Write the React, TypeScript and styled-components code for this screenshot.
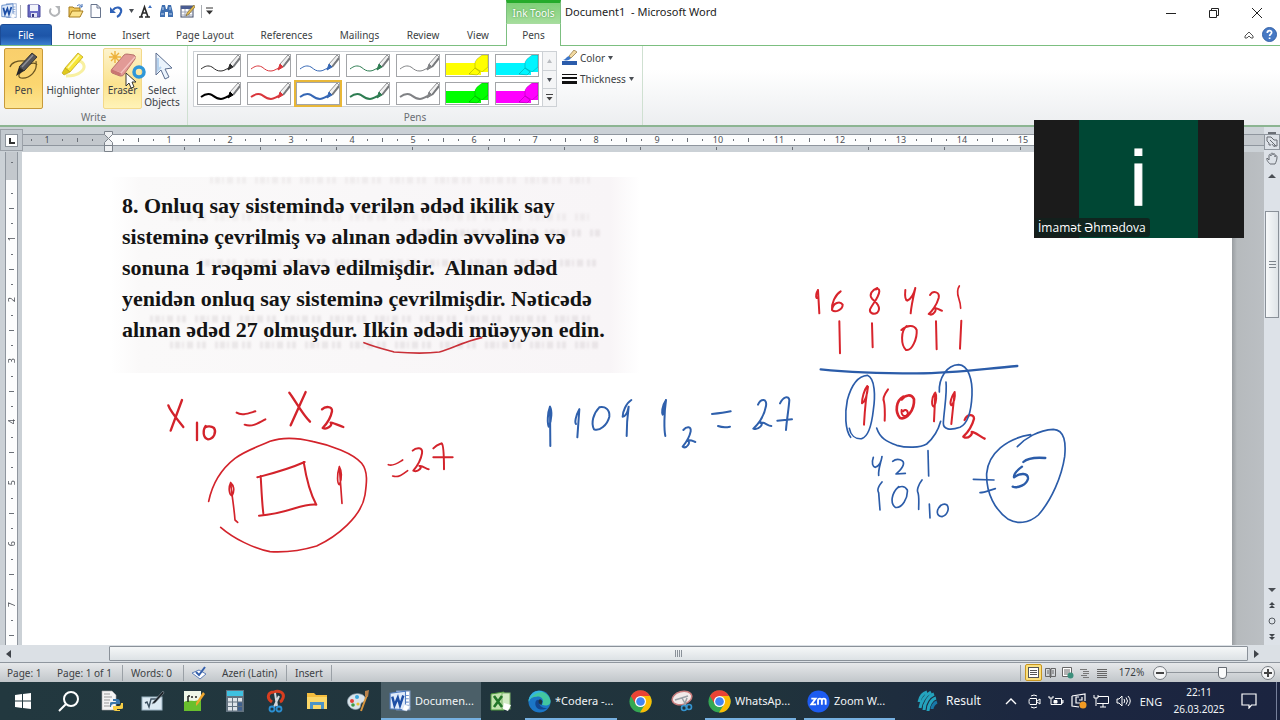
import React from 'react';
import styled, { createGlobalStyle } from 'styled-components';

const GlobalStyle = createGlobalStyle`
  * { box-sizing: border-box; }
  body { margin: 0; background: #c9d0d6; }
  button, input { font: inherit; color: inherit; }
  button { border: 0; background: none; padding: 0; margin: 0; cursor: default; }
  svg { display: block; flex: none; }
`;

const ui = '"Noto Sans", "Open Sans", sans-serif';
const green = '#7cbf80';

const Shell = styled.div`
  position: relative;
  display: flex;
  flex-direction: column;
  min-height: 100vh;
  overflow: hidden;
  font: 10px/14px ${ui};
  color: #3c3f44;
`;
const Spacer = styled.div`flex: 1;`;

/* ---------- title bar and tabs ---------- */
const TitleBar = styled.header`
  display: flex;
  height: 24px;
  background: #fff;
`;
const QuickAccess = styled.div`
  display: flex;
  align-items: center;
  width: 506px;
  padding: 0 0 2px 1px;
`;
const QuickButton = styled.button<{ $w?: number }>`
  display: flex;
  justify-content: center;
  width: ${p => p.$w ?? 21}px;
`;
const Divider = styled.span`
  width: 1px;
  height: 13px;
  background: #a9adb2;
`;
const InkTools = styled.div`
  width: 55px;
  padding-top: 3px;
  border: 1px solid ${green};
  border-top: 3px solid #25ab2b;
  border-bottom-color: #a8dca0;
  background: linear-gradient(#7fd078, #a5dd9c);
  color: #fff;
  text-align: center;
  text-shadow: 0 0 2px #3d8b3d;
  white-space: nowrap;
`;
const WindowTitle = styled.h1`
  flex: 1;
  margin: 0;
  padding-left: 4px;
  font-size: 11px;
  line-height: 24px;
  font-weight: 400;
  color: #222;
`;
const WindowButtons = styled.div`
  display: flex;
  align-items: center;
  padding: 2px 2px 0 0;
`;
const WindowButton = styled.button`
  display: flex;
  justify-content: center;
  width: 43px;
`;
const TabRow = styled.nav`
  display: flex;
  height: 22px;
  background: #fff;
  border-bottom: 1px solid ${green};
`;
const FileTab = styled.button`
  width: 52px;
  margin-right: 3px;
  border: 1px solid #1c4c96;
  border-bottom: 0;
  border-radius: 3px 3px 0 0;
  background: linear-gradient(#2461b3, #1d55a8 55%, #3c7fd0);
  color: #fff;
`;
const Tab = styled.button<{ $w: number }>`
  width: ${p => p.$w}px;
  text-align: center;
  white-space: nowrap;
`;
const ActiveTab = styled.button`
  width: 55px;
  margin: 0 0 -1px auto;
  border: 1px solid ${green};
  border-width: 0 1px;
  background: #fff;
`;
const TabList = styled.div`
  display: flex;
  width: 561px;
`;
const TabTools = styled.div`
  display: flex;
  align-items: center;
  gap: 8px;
  margin-left: auto;
  padding-right: 3px;
`;

/* ---------- ribbon ---------- */
const Ribbon = styled.section`
  display: flex;
  height: 81px;
  background: linear-gradient(#fff 30%, #eceef0);
  border-bottom: 2px solid #8cb592;
`;
const Group = styled.div<{ $w: number }>`
  display: flex;
  flex-direction: column;
  width: ${p => p.$w}px;
  border-right: 1px solid #cfe0d1;
`;
const GroupBody = styled.div`
  display: flex;
  flex: 1;
  padding: 2px 4px 0;
`;
const GroupLabel = styled.div`
  height: 15px;
  color: #6a6e73;
  text-align: center;
`;
const BigButton = styled.button<{ $w: number; $state?: 'on' | 'hover' }>`
  position: relative;
  display: flex;
  flex-direction: column;
  align-items: center;
  gap: 1px;
  width: ${p => p.$w}px;
  height: 61px;
  padding-top: 2px;
  line-height: 12px;
  border: 1px solid ${p => (p.$state === 'on' ? '#c79a3a' : p.$state === 'hover' ? '#f3d98a' : 'transparent')};
  border-radius: 2px;
  background: ${p =>
    p.$state === 'on'
      ? 'linear-gradient(#f9cf6c, #fbd670 60%, #fde591)'
      : p.$state === 'hover'
        ? 'linear-gradient(#fdf3cd, #fbe38f 60%, #fff3b8)'
        : 'none'};
`;
const Pointer = styled.svg`
  position: absolute;
  left: 20px;
  top: 14px;
`;
const Gallery = styled.div`
  display: flex;
  width: 364px;
  height: 56px;
  margin: 3px 0 0 1px;
  border: 1px solid #cdd1d5;
  background: #fff;
`;
const Swatches = styled.div`
  display: grid;
  grid-template-columns: repeat(7, 44px);
  justify-content: space-between;
  align-content: start;
  row-gap: 5px;
  width: 348px;
  padding: 2px 3px;
`;
const Swatch = styled.button<{ $on?: boolean }>`
  height: 23px;
  border: 1px solid #a3a5a8;
  outline: ${p => (p.$on ? '2px solid #e8b738' : 'none')};
`;
const GalleryScroll = styled.div`
  display: grid;
  grid-template-rows: repeat(3, 1fr);
  flex: 1;
  border-left: 1px solid #cdd1d5;
  background: #f4f5f6;
`;
const GalleryStep = styled.button`
  display: flex;
  align-items: center;
  justify-content: center;
  & + & { border-top: 1px solid #cdd1d5; }
`;
const InkOptions = styled.div`
  display: flex;
  flex-direction: column;
  gap: 5px;
  padding: 2px 0 0 5px;
`;
const InkOption = styled.button`
  display: flex;
  align-items: center;
  gap: 3px;
  height: 16px;
`;

/* ---------- document area ---------- */
const Workspace = styled.main`
  display: flex;
  flex: 1;
  background: #cbd1d6;
`;
const Column = styled.div`
  display: flex;
  flex: 1;
  flex-direction: column;
  min-width: 0;
`;
const RulerRow = styled.div`
  display: flex;
  height: 25px;
`;
const TabStop = styled.button`
  width: 23px;
  height: 22px;
  margin-top: 2px;
  padding: 3px 4px;
  border: 1px solid #9ba1a8;
  background: #c3c9cf;
`;
const TabStopFace = styled.span`
  display: block;
  width: 13px;
  height: 13px;
  padding: 3px 0 0 3px;
  border: 1px solid #8b929a;
  background: #fff;
`;
const RulerStack = styled.div`
  position: relative;
  flex: 1;
  min-width: 0;
  padding-top: 7px;
  overflow: hidden;
`;
const HRuler = styled.div`
  display: flex;
  height: 12px;
  border: 1px solid #8f969e;
  border-width: 1px 0;
  background: #c3c8cd;
`;
const RulerPart = styled.div<{ $grey?: boolean }>`
  display: flex;
  flex: none;
  padding-left: ${p => (p.$grey ? 1 : 8)}px;
  padding-right: ${p => (p.$grey ? 8 : 40)}px;
  background: ${p => (p.$grey ? '#c3c8cd' : '#fcfdfd')};
`;
const Slot = styled.span<{ $v?: boolean; $wide?: boolean }>`
  display: flex;
  align-items: center;
  justify-content: center;
  flex: none;
  width: ${p => (p.$v ? 11 : p.$wide ? 16 : 15)}px;
  height: ${p => (p.$v ? (p.$wide ? 16 : 15) : 10)}px;
  font-size: 9px;
  line-height: 10px;
  color: #4d5157;
`;
const Turned = styled.span`
  writing-mode: vertical-rl;
  transform: rotate(180deg);
  line-height: 11px;
`;
const Mark = styled.i<{ $w: number; $h: number }>`
  flex: none;
  width: ${p => p.$w}px;
  height: ${p => p.$h}px;
  background: #6b7077;
`;
const StopRow = styled.div`
  display: flex;
  gap: 75px;
  padding: 1px 0 0 161px;
`;
const Indent = styled.svg`
  position: absolute;
  left: 81px;
  top: 4px;
`;
const Body = styled.div`
  display: flex;
  flex: 1;
  overflow: hidden;
`;
const VRuler = styled.div`
  display: flex;
  width: 22px;
  height: 0;
  min-height: 100%;
  overflow: hidden;
  padding: 0 4px 0 5px;
`;
const VRulerTrack = styled.div`
  width: 13px;
  border: 1px solid #8f969e;
  border-width: 0 1px;
  background: linear-gradient(#c3c8cd 28px, #fcfdfd 28px);
  padding-top: 3px;
  overflow: hidden;
`;
const Page = styled.article`
  position: relative;
  flex: 1;
  min-width: 0;
  background: #fff;
`;
const Gutter = styled.div`
  width: 32px;
  background: linear-gradient(90deg, #999da1, #b6babd 5px, #bbbfc3);
`;
const Scan = styled.div`
  position: relative;
  width: 530px;
  height: 196px;
  margin: 25px 0 0 88px;
  padding: 13px 0 0 12px;
  background: linear-gradient(90deg, #fff, #faf9f9 30px, #f8f5f7 500px, #fff);
`;
const ShowThrough = styled.svg`
  position: absolute;
  left: 0;
  top: 0;
  filter: blur(1px);
`;
const Question = styled.p`
  position: relative;
  margin: 0;
  font: 700 22px/31px "Liberation Serif", serif;
  color: #141414;
  white-space: pre;
`;
const InkLayer = styled.svg`
  position: absolute;
  left: 0;
  top: 0;
`;
const VScroll = styled.div`
  display: flex;
  flex-direction: column;
  align-items: center;
  width: 16px;
  padding-top: 4px;
  background: #dde2e8;
`;
const ScrollButton = styled.button<{ $h: number; $boxed?: boolean }>`
  display: flex;
  align-items: center;
  justify-content: center;
  width: 16px;
  height: ${p => p.$h}px;
  border: ${p => (p.$boxed ? '1px solid #8f969e' : '0')};
`;
const VThumb = styled.div`
  display: grid;
  place-items: center;
  width: 14px;
  height: 107px;
  margin-top: 26px;
  border: 1px solid #8a9199;
  background: linear-gradient(90deg, #f7f9fa, #dfe4e8);
`;
const HScroll = styled.div`
  display: flex;
  height: 17px;
  padding-right: 16px;
  background: #dbe0e5;
`;
const HThumb = styled.div`
  display: grid;
  place-items: center;
  flex: 1;
  margin: 1px 0 1px 93px;
  border: 1px solid #8a9199;
  border-radius: 1px;
  background: linear-gradient(#f5f7f8, #dde2e5);
`;

/* ---------- status bar ---------- */
const StatusBar = styled.footer`
  display: flex;
  align-items: center;
  height: 20px;
  padding: 0 5px 0 7px;
  border-top: 1px solid #8f969e;
  background: linear-gradient(#e6e8ea, #c1c6ca);
`;
const StatusItem = styled.button<{ $w: number }>`
  display: flex;
  width: ${p => p.$w}px;
  white-space: nowrap;
`;
const StatusSep = styled.span<{ $gap?: number }>`
  width: 1px;
  height: 16px;
  margin-right: ${p => p.$gap ?? 8}px;
  background: #9aa0a6;
`;
const ViewButton = styled.button<{ $on?: boolean }>`
  display: flex;
  align-items: center;
  justify-content: center;
  width: 17px;
  height: 17px;
  border: ${p => (p.$on ? '1px solid #c79520' : '0')};
  border-radius: 2px;
  background: ${p => (p.$on ? '#fbe07c' : 'none')};
`;
const RoundButton = styled.button`
  display: grid;
  place-items: center;
  width: 14px;
  height: 14px;
  border: 1px solid #777c82;
  border-radius: 50%;
  background: #f4f5f6;
`;
const ZoomSlider = styled.input`
  appearance: none;
  width: 94px;
  height: 14px;
  margin: 0;
  background: linear-gradient(#8f959b, #8f959b) center / 100% 1px no-repeat;
  &::-webkit-slider-thumb {
    appearance: none;
    width: 9px;
    height: 12px;
    border: 1px solid #666b72;
    border-radius: 1px 1px 5px 5px;
    background: #fafbfb;
  }
`;

/* ---------- taskbar ---------- */
const Taskbar = styled.nav`
  display: flex;
  height: 38px;
  background: linear-gradient(90deg, #22383f, #20333c 60%, #1c2740 80%, #1b2440);
  color: #f2f5f7;
`;
const Task = styled.button<{ $w: number; $gap?: number; $pad?: number; $open?: boolean; $active?: boolean; $label?: boolean }>`
  display: flex;
  flex: none;
  align-items: center;
  justify-content: ${p => (p.$label ? 'flex-start' : 'center')};
  gap: 4px;
  width: ${p => p.$w}px;
  margin-left: ${p => p.$gap ?? 0}px;
  padding-left: ${p => p.$pad ?? (p.$label ? 3 : 0)}px;
  border-top: 2px solid transparent;
  border-bottom: 2px solid ${p => (p.$open ? '#76b0e0' : 'transparent')};
  background: ${p => (p.$active ? '#4b5f68' : 'none')};
  font-size: 11px;
  white-space: nowrap;
`;
const ResultLabel = styled.span`
  padding-left: 4px;
  font-size: 12px;
`;
const TrayButton = styled.button<{ $w: number; $size?: number }>`
  display: flex;
  flex: none;
  align-items: center;
  justify-content: center;
  width: ${p => p.$w}px;
  font-size: ${p => p.$size ?? 11}px;
  line-height: 17px;
`;
const ShowDesktop = styled.button`
  width: 4px;
  margin-left: 9px;
  border-left: 1px solid #76809a;
`;

/* ---------- meeting tile ---------- */
const VideoTile = styled.aside`
  position: absolute;
  right: 36px;
  top: 120px;
  width: 210px;
  height: 118px;
  background: #1b1b1b;
`;
const Avatar = styled.div`
  width: 119px;
  height: 118px;
  margin-left: 45px;
  padding-top: 23px;
  background: #004734;
  color: #fff;
  font: 400 78px/72px "Liberation Sans", sans-serif;
  -webkit-text-stroke: 1px #fff;
  text-align: center;
`;
const NameTag = styled.span`
  position: absolute;
  left: 1px;
  bottom: 1px;
  height: 19px;
  padding: 0 4px 0 3px;
  border-radius: 3px;
  background: rgba(18, 32, 28, 0.85);
  color: #fff;
  font: 12px/19px "Open Sans", "Noto Sans", sans-serif;
  white-space: nowrap;
`;

/* ---------- small drawings ---------- */
const Down = ({ up, w = 6, c = '#4a4e54' }: { up?: boolean; w?: number; c?: string }) => (
  <svg width={w} height="4" viewBox="0 0 6 4" preserveAspectRatio="none"><path d={up ? 'M0 4L3 0L6 4Z' : 'M0 0H6L3 4Z'} fill={c} /></svg>
);
const Side = ({ left }: { left?: boolean }) => (
  <svg width="5" height="8" viewBox="0 0 5 8"><path d={left ? 'M5 0V8L0 4Z' : 'M0 0V8L5 4Z'} fill="#40444a" /></svg>
);
const WordIcon = ({ s = 16 }: { s?: number }) => (
  <svg width={s} height={s} viewBox="0 0 20 20">
    <rect x="7" y="1" width="12" height="17" fill="#fff" stroke="#8ba5d0" />
    <path d="M14 5h4M14 8h4M14 11h4M14 14h4" stroke="#7a99cf" />
    <path d="M1 3L15 1V18L1 17Z" fill="#dfeafa" stroke="#4f7cc0" />
    <path d="M3 6l2 8 3-7 2 7 3-9" fill="none" stroke="#1d4ea5" strokeWidth="2.2" />
    <path d="M14 13l5 2-3 4-4-1z" fill="#fff" stroke="#c8d4e8" strokeWidth=".5" />
  </svg>
);
const SaveIcon = () => (
  <svg width="14" height="14" viewBox="0 0 14 14">
    <path d="M1 1H12L13 2V13H1Z" fill="#6a6bc4" stroke="#4b4b9c" />
    <rect x="3" y="1" width="8" height="6" fill="#f2f4fb" /><rect x="4" y="9" width="6" height="4" fill="#dfe1f2" /><rect x="5" y="10" width="2" height="3" fill="#34347c" />
  </svg>
);
const RedoIcon = () => (
  <svg width="13" height="13" viewBox="0 0 13 13"><path d="M3 3.5A4.5 4.5 0 1 0 10.5 4" fill="none" stroke="#b3b5b8" strokeWidth="2" /><path d="M7 1h5v5z" fill="#b3b5b8" /></svg>
);
const OpenIcon = () => (
  <svg width="16" height="14" viewBox="0 0 16 14">
    <path d="M1 13V3h4l1 1h6v3" fill="#f0c95c" stroke="#a67c1d" /><path d="M1 13L4 7H15L12 13Z" fill="#fbe28a" stroke="#a67c1d" />
    <path d="M9 2c2-2 4-1 5 1M14 0v3h-3" fill="none" stroke="#3e6cb5" />
  </svg>
);
const NewIcon = () => (
  <svg width="11" height="14" viewBox="0 0 11 14"><path d="M1 .5H7L10.5 4V13.5H1Z" fill="#fdfdff" stroke="#68758d" /><path d="M7 .5V4H10.5" fill="none" stroke="#68758d" /></svg>
);
const UndoIcon = () => (
  <svg width="13" height="13" viewBox="0 0 13 13"><path d="M3 5C6 1 12 2 11 7C10.5 9 9 11 7 12" fill="none" stroke="#2f62b8" strokeWidth="2.2" /><path d="M0 2V8H6Z" fill="#2f62b8" /></svg>
);
const GrowIcon = () => (
  <svg width="15" height="14" viewBox="0 0 15 14"><path d="M1 13h4M7 13h5M3 13L6.500 3L10 13M4 9h5" fill="none" stroke="#2a2a2a" strokeWidth="1.600" /><path d="M10 4l2-3 2 3z" fill="#3d6fc0" /></svg>
);
const FindIcon = () => (
  <svg width="15" height="14" viewBox="0 0 15 14">
    <path d="M3 1h3l1 4h1l1-4h3l2 8v4H9V8H6v5H1V9Z" fill="#3f6fb0" /><path d="M2 10h3M10 10h3M4 3v3M11 3v3" stroke="#bcd2ee" />
  </svg>
);
const TableIcon = () => (
  <svg width="15" height="15" viewBox="0 0 15 15">
    <rect x="1" y="2" width="12" height="11" fill="#fff" stroke="#3f4a66" /><rect x="1" y="2" width="12" height="3" fill="#4a5c92" />
    <path d="M1 8h12M1 11h12M5 5v8M9 5v8" stroke="#8b93a8" strokeWidth=".8" /><path d="M14 1L7 9L6 12L9 10L15 3Z" fill="#e5bd52" stroke="#6f5a28" strokeWidth=".6" />
  </svg>
);
const PenIcon = () => (
  <svg width="32" height="32" viewBox="0 0 32 32">
    <path d="M17 10C9 9 3 12 2 16M28 10C30 20 22 28 13 27C9 26 11 22 16 17C20 13 27 10 29 14" fill="none" stroke="#6b5520" strokeWidth="1.200" />
    <path d="M24 2L29 6L16 20L11 16Z" fill="#55555a" stroke="#222" strokeWidth=".8" /><path d="M11 16L16 20L8 25Z" fill="#26262a" /><path d="M25 4L14 16" stroke="#909096" strokeWidth="1.500" />
  </svg>
);
const MarkerIcon = () => (
  <svg width="32" height="32" viewBox="0 0 32 32">
    <path d="M19 10C27 9 29 16 25 20C20 25 14 25 9 25" fill="none" stroke="#f8f0a0" strokeWidth="3" />
    <path d="M21 2L26 6L13 21L8 17Z" fill="#f7e637" stroke="#c0a51c" strokeWidth=".8" /><path d="M8 17L13 21L7 24L5 22Z" fill="#e0c91c" stroke="#b59a18" strokeWidth=".6" /><path d="M22 4L11 17" stroke="#fffbb0" strokeWidth="1.800" />
  </svg>
);
const EraserIcon = () => (
  <svg width="32" height="32" viewBox="0 0 32 32">
    <path d="M8 0V12M2 6H14M4 2L12 10M12 2L4 10" stroke="#edb23c" strokeWidth="1.400" />
    <path d="M17 4Q18 3 20 3L27 4Q29 5 28 8L18 22Q16 26 13 25L5 22Q3 20 5 18Z" fill="#e29a96" stroke="#a9605c" strokeWidth=".8" />
    <path d="M4 19L14 22L28 6" fill="none" stroke="#f6c5c1" strokeWidth="1.200" /><path d="M14 22L13 25L4 21V18Z" fill="#c97671" />
  </svg>
);
const SelectIcon = () => (
  <svg width="32" height="32" viewBox="0 0 32 32"><path d="M10 2V24L15 19L19 28L23 26L19 18L26 17Z" fill="#eaf3fc" stroke="#5b6d8f" /><path d="M12 7V19L15 16" fill="none" stroke="#b5d2ee" strokeWidth="2" /></svg>
);
const PenSwatch = ({ color, bold }: { color: string; bold?: boolean }) => (
  <svg width="42" height="21" viewBox="0 0 42 21">
    <rect width="42" height="21" fill="#fff" />
    <path d="M3 14C7 11 10 10 14 12C18 15 19 16 23 16C26 16 28 14 31 13" fill="none" stroke={color} strokeWidth={bold ? 2 : 1} />
    <path d="M40 0L42 2L35 12L32 9Z" fill="#f0f0f0" stroke="#77797c" strokeWidth=".8" /><path d="M42 3L35 12" stroke="#77797c" strokeWidth="2" /><path d="M32 9L35 12L30 15Z" fill={color} stroke={color} />
  </svg>
);
const MarkerSwatch = ({ color }: { color: string }) => (
  <svg width="42" height="21" viewBox="0 0 42 21">
    <rect width="42" height="21" fill="#fff" /><path d="M0 8H42V20H0Z" fill={color} />
    <path d="M31 4L36 0H42V12L36 17L29 13V7Z" fill={color} stroke="rgba(0,0,0,.22)" strokeWidth=".8" /><path d="M29 13L34 17L31 20L23 19Z" fill={color} stroke="rgba(0,0,0,.25)" strokeWidth=".8" /><rect x="35" y="17" width="7" height="4" fill="#fff" />
  </svg>
);
const Chrome = () => (
  <svg width="23" height="23" viewBox="0 0 24 24">
    <circle cx="12" cy="12" r="11.500" fill="#34a853" />
    <path d="M2 6.200A11.500 11.500 0 0 1 22 6.200H12L7 14.500Z" fill="#ea4335" /><path d="M22 6.200A11.500 11.500 0 0 1 11.500 23.500L17 14.500L12 6.200Z" fill="#fbbc05" />
    <circle cx="12" cy="12" r="5.800" fill="#fff" /><circle cx="12" cy="12" r="4.500" fill="#4285f4" />
  </svg>
);

const Ticks = ({ v }: { v?: boolean }) => (
  <>
    <Slot $v={v}><Mark $w={v ? 2 : 1} $h={v ? 1 : 2} /></Slot>
    <Slot $v={v}><Mark $w={v ? 5 : 1} $h={v ? 1 : 4} /></Slot>
    <Slot $v={v}><Mark $w={v ? 2 : 1} $h={v ? 1 : 2} /></Slot>
  </>
);
const Segment = ({ n, v }: { n: number; v?: boolean }) => (
  <>
    <Ticks v={v} />
    <Slot $v={v} $wide>{v ? <Turned>{n}</Turned> : n}</Slot>
  </>
);

const pens = ['#2b2b2b', '#d9363c', '#3567b5', '#2e7d52', '#808285'];
const question = [
  '8. Onluq say sistemində verilən ədəd ikilik say',
  'sisteminə çevrilmiş və alınan ədədin əvvəlinə və',
  'sonuna 1 rəqəmi əlavə edilmişdir.  Alınan ədəd',
  'yenidən onluq say sisteminə çevrilmişdir. Nəticədə',
  'alınan ədəd 27 olmuşdur. Ilkin ədədi müəyyən edin.',
];

const Ink = () => (
  <InkLayer width="1210" height="493" viewBox="22 152 1210 493" aria-label="Ink annotations">
    <g fill="none" strokeLinecap="round" strokeLinejoin="round">
      <g transform="translate(320 125) scale(.33333)" stroke="#c93038" strokeWidth="5">
        <path d="M132 653C160 664 190 672 222 681C260 684 320 686 358 681C390 674 430 650 485 638" />
      </g>
      <g transform="translate(140 370) scale(.33333)" stroke="#d3232b" strokeWidth="6">
        <path strokeWidth="7" d="M85 106C90 122 105 140 130 171M126 90L92 182M171 158V210M197 168C188 180 188 204 204 208C222 206 230 186 222 174C214 168 202 168 196 172" />
        <path d="M290 128C305 138 325 130 346 124M314 164C335 172 355 160 376 148" />
        <path strokeWidth="7" d="M448 68C465 90 485 130 510 155M497 66L452 166" />
        <path strokeWidth="7" d="M546 118C556 108 578 108 576 124C572 146 556 166 548 174C560 180 580 166 572 158C585 160 600 168 610 171" />
        <path strokeWidth="5" d="M206 394C215 350 240 300 285 265C320 240 350 232 390 214C430 200 480 205 520 215C570 225 640 250 665 280C685 305 680 340 675 375C665 440 590 500 530 528C490 540 440 548 390 545C340 535 280 505 242 472" />
        <path strokeWidth="5" d="M272 338C264 355 268 374 276 378C286 360 280 345 272 338C276 380 282 410 285 450L293 457" />
        <path d="M352 322C390 312 440 300 494 276M491 276C498 320 510 370 529 404C480 400 450 430 357 437M362 318C364 350 366 400 370 430" />
        <path strokeWidth="5" d="M606 400L598 290C590 315 592 342 598 344C608 325 604 300 598 290M745 284C760 290 775 278 788 270M758 318C775 324 790 312 803 302" />
        <path d="M818 242C828 232 850 230 846 250C842 275 830 290 820 302C835 308 850 290 838 288C848 285 858 298 866 298M880 235C892 222 902 222 905 220C908 222 912 240 912 298M880 262H938" />
      </g>
      <g transform="translate(520 370) scale(.33333)" stroke="#2f60ac" strokeWidth="6">
        <path d="M91 228L90 110C82 130 82 160 86 170C96 150 96 120 90 110M178 118L172 202M178 118C166 140 164 158 168 162" />
        <path d="M238 112C220 130 212 160 222 178C238 185 262 165 268 140C270 118 255 108 238 112M334 90C318 100 308 125 308 140C316 140 322 130 326 110C322 140 320 170 320 198" />
        <path d="M438 90C424 110 426 130 428 134C434 120 436 105 438 90C432 130 432 180 436 198M490 180C500 168 514 168 512 184C508 205 496 220 488 230C500 238 515 215 502 212C512 208 520 214 526 216" />
        <path d="M576 132C600 130 615 128 632 124M594 168C605 172 620 172 630 170M714 104C722 86 742 84 738 108C732 140 712 165 700 176C715 182 735 160 720 158C735 155 742 168 754 168" />
        <path d="M780 100C790 80 806 76 808 90C806 120 800 150 798 180M772 152L816 148" />
      </g>
      <g transform="translate(790 270) scale(.33333)" stroke="#d8242c" strokeWidth="6">
        <path d="M84 60L88 130M84 60C78 70 78 80 80 84M152 64C135 75 124 100 126 120C136 130 158 118 158 104C150 92 130 98 126 118" />
        <path d="M262 54C246 60 236 74 246 86C258 96 276 112 262 128C250 136 238 128 240 118C248 100 266 84 268 64C268 58 264 54 258 58" />
        <path d="M346 60C344 80 346 90 352 92C364 86 372 70 376 54C370 80 364 105 362 130M420 75C430 60 450 66 446 84C440 106 425 125 416 132C430 140 445 115 432 114C440 112 448 120 456 122" />
        <path strokeWidth="5" d="M508 48C500 60 504 78 506 84C510 96 512 104 512 115" />
        <path d="M148 154L150 250M246 160L248 232M350 168C332 182 332 225 348 240C366 244 382 205 380 180C372 162 350 166 334 180M438 154L440 238M514 152L510 236" />
        <path d="M232 348C222 360 216 385 216 400C226 395 232 370 234 350C226 390 224 430 222 464M294 358C284 372 278 388 282 395C285 410 285 430 284 452" />
        <path strokeWidth="8" d="M340 380C318 392 314 425 330 444C350 450 374 420 372 388C365 370 345 375 335 388" />
        <path d="M335 420C332 440 350 444 354 430C352 418 342 418 340 424M434 370C424 385 424 408 432 410C440 395 440 375 436 368L432 454M494 366C484 380 478 400 484 406C492 400 496 380 494 366L484 462" />
        <path strokeWidth="7" d="M524 450C530 432 552 430 552 446C546 470 530 490 520 500C535 510 550 490 545 486C555 485 570 500 584 506" />
      </g>
      <g transform="translate(790 270) scale(.33333)" stroke="#2b5ca9" strokeWidth="5">
        <path strokeWidth="7" d="M92 298C150 304 250 310 380 310C500 310 580 296 682 288" />
        <path d="M182 502C165 480 164 430 172 390C184 345 205 318 232 316C256 325 256 380 250 420C245 465 235 500 215 506C195 508 182 495 178 475" />
        <path d="M260 474C270 505 290 515 320 526C350 534 390 534 410 522C430 505 445 480 452 454M448 366C446 325 470 285 506 284C535 285 548 330 546 375C544 420 535 460 510 472C480 482 460 478 460 460C462 420 472 370 468 336" />
        <path d="M250 562C244 580 248 590 256 592C268 588 274 575 276 560C272 580 264 600 266 616M308 574C322 562 344 570 340 584C336 598 322 608 318 612L346 610M414 542L416 618" />
        <path d="M276 636C264 650 262 662 266 668L270 720M326 650C304 670 300 700 316 712C336 716 354 685 352 660C345 648 335 648 326 652M396 630C384 645 380 662 384 668C388 680 386 700 386 718" />
        <path d="M418 702L420 744M452 706C438 720 438 738 456 740C472 736 480 715 470 704C462 700 452 704 448 712M550 628L612 630M570 668C585 668 600 660 616 656" />
        <path d="M682 530C705 505 745 480 790 478C825 480 828 520 824 560C815 620 785 690 745 735C715 762 680 762 655 748C615 720 588 670 590 610C595 550 650 505 722 494" />
        <path strokeWidth="7" d="M700 576C715 562 740 562 766 564M696 590C680 602 670 612 672 622C690 608 715 608 714 626C710 644 684 656 668 650" />
      </g>
    </g>
  </InkLayer>
);

export default function App() {
  return (
    <Shell>
      <GlobalStyle />
      <TitleBar>
        <QuickAccess>
          <QuickButton $w={16} aria-label="Word"><WordIcon /></QuickButton>
          <QuickButton $w={7} as="span"><Divider /></QuickButton>
          <QuickButton $w={19} aria-label="Save"><SaveIcon /></QuickButton>
          <QuickButton $w={23} aria-label="Redo"><RedoIcon /></QuickButton>
          <QuickButton $w={19} aria-label="Open"><OpenIcon /></QuickButton>
          <QuickButton aria-label="New"><NewIcon /></QuickButton>
          <QuickButton aria-label="Undo"><UndoIcon /></QuickButton>
          <QuickButton $w={8} aria-label="Undo list"><Down w={5} /></QuickButton>
          <QuickButton aria-label="Grow font"><GrowIcon /></QuickButton>
          <QuickButton aria-label="Find"><FindIcon /></QuickButton>
          <QuickButton aria-label="Draw table"><TableIcon /></QuickButton>
          <QuickButton $w={7} as="span"><Divider /></QuickButton>
          <QuickButton $w={8} aria-label="Customize">
            <svg width="7" height="8" viewBox="0 0 7 8"><path d="M0 1H7" stroke="#333" /><path d="M0 3.500H7L3.500 7.500Z" fill="#333" /></svg>
          </QuickButton>
        </QuickAccess>
        <InkTools>Ink Tools</InkTools>
        <WindowTitle>Document1&nbsp; - Microsoft Word</WindowTitle>
        <WindowButtons>
          <WindowButton aria-label="Minimize"><svg width="10" height="10"><path d="M0 5.500H10" stroke="#222" /></svg></WindowButton>
          <WindowButton aria-label="Restore"><svg width="10" height="10" fill="none" stroke="#222"><path d="M.5 2.500H7.500V9.500H.5ZM2.500 2.500V.5H9.500V7.500H7.500" /></svg></WindowButton>
          <WindowButton aria-label="Close"><svg width="10" height="10" stroke="#222"><path d="M0 0L10 10M10 0L0 10" /></svg></WindowButton>
        </WindowButtons>
      </TitleBar>
      <TabRow>
        <TabList>
          <FileTab>File</FileTab>
          <Tab $w={54}>Home</Tab>
          <Tab $w={54}>Insert</Tab>
          <Tab $w={84}>Page Layout</Tab>
          <Tab $w={79}>References</Tab>
          <Tab $w={67}>Mailings</Tab>
          <Tab $w={60}>Review</Tab>
          <Tab $w={50}>View</Tab>
          <ActiveTab>Pens</ActiveTab>
        </TabList>
        <TabTools>
          <button aria-label="Minimize ribbon"><svg width="10" height="8" viewBox="0 0 10 8"><path d="M1 5L5 1L9 5V7L7 7L5 5L3 7H1Z" fill="none" stroke="#555" /></svg></button>
          <button aria-label="Help"><svg width="15" height="15" viewBox="0 0 15 15"><circle cx="7.500" cy="7.500" r="7" fill="#4779c4" stroke="#3462a8" /><path d="M5.300 6C5.300 2.800 9.800 3 9.600 5.600C9.500 7 7.600 7.200 7.600 9M7.600 10.500V12" fill="none" stroke="#fff" strokeWidth="1.700" /></svg></button>
        </TabTools>
      </TabRow>
      <Ribbon>
        <Group $w={188}>
          <GroupBody>
            <BigButton $w={39} $state="on"><PenIcon /><span>Pen</span></BigButton>
            <BigButton $w={60}><MarkerIcon /><span>Highlighter</span></BigButton>
            <BigButton $w={39} $state="hover">
              <EraserIcon /><span>Eraser</span>
              <Pointer width="28" height="34" viewBox="0 0 28 34">
                <circle cx="15" cy="9" r="5" fill="none" stroke="#2f97d8" strokeWidth="3.500" />
                <path d="M2 10V23L5 20L7 25L10 24L8 19H12Z" fill="#fff" stroke="#222" strokeWidth=".9" />
              </Pointer>
            </BigButton>
            <BigButton $w={40}><SelectIcon /><span>Select<br />Objects</span></BigButton>
          </GroupBody>
          <GroupLabel>Write</GroupLabel>
        </Group>
        <Group $w={455}>
          <GroupBody>
            <Gallery>
              <Swatches>
                {pens.map(c => <Swatch key={c} aria-label="Fine pen"><PenSwatch color={c} /></Swatch>)}
                <Swatch aria-label="Yellow highlighter"><MarkerSwatch color="#ffff00" /></Swatch>
                <Swatch aria-label="Turquoise highlighter"><MarkerSwatch color="#00f5ff" /></Swatch>
                {pens.map((c, i) => <Swatch key={c} $on={i === 2} aria-label="Medium pen"><PenSwatch color={i === 0 ? '#000' : c} bold /></Swatch>)}
                <Swatch aria-label="Green highlighter"><MarkerSwatch color="#00ff00" /></Swatch>
                <Swatch aria-label="Pink highlighter"><MarkerSwatch color="#ff00ff" /></Swatch>
              </Swatches>
              <GalleryScroll>
                <GalleryStep aria-label="Scroll up"><Down up c="#b9bcc0" w={5} /></GalleryStep>
                <GalleryStep aria-label="Scroll down"><Down w={5} /></GalleryStep>
                <GalleryStep aria-label="More pens"><svg width="7" height="7" viewBox="0 0 7 7"><path d="M0 .5H7" stroke="#444" /><path d="M.5 3H6.500L3.500 6.500Z" fill="#444" /></svg></GalleryStep>
              </GalleryScroll>
            </Gallery>
            <InkOptions>
              <InkOption>
                <svg width="15" height="16" viewBox="0 0 15 16"><path d="M0 11H15V15H0Z" fill="#2b5cab" /><path d="M1 10C3 10 4 7 7 6L9 8C8 10 5 11 1 10Z" fill="#3e77c9" /><path d="M7 6L12 0L15 2L9 8Z" fill="#f2d9a0" stroke="#8b7240" strokeWidth=".7" /></svg>
                Color <Down w={5} />
              </InkOption>
              <InkOption>
                <svg width="15" height="12" viewBox="0 0 15 12"><path d="M0 1.500H15" stroke="#111" /><path d="M0 5H15" stroke="#111" strokeWidth="2" /><path d="M0 9.500H15" stroke="#111" strokeWidth="3" /></svg>
                Thickness <Down w={5} />
              </InkOption>
            </InkOptions>
          </GroupBody>
          <GroupLabel>Pens</GroupLabel>
        </Group>
      </Ribbon>

      <Workspace>
        <Column>
          <RulerRow>
            <TabStop aria-label="Tab stop">
              <TabStopFace><svg width="6" height="6"><path d="M1 0V5H6" fill="none" stroke="#333" strokeWidth="2" /></svg></TabStopFace>
            </TabStop>
            <RulerStack>
              <HRuler>
                <RulerPart $grey>
                  <Slot><Mark $w={1} $h={2} /></Slot><Slot $wide>1</Slot><Ticks />
                </RulerPart>
                <RulerPart>{Array.from({ length: 15 }, (_, i) => <Segment key={i} n={i + 1} />)}</RulerPart>
              </HRuler>
              <StopRow>{Array.from({ length: 14 }, (_, i) => <Mark key={i} $w={1} $h={3} />)}</StopRow>
              <Indent width="9" height="21" viewBox="0 0 9 21"><path d="M.5 .5H8.500V3.500L4.500 7.500L.5 3.500ZM4.500 7.500L8.500 11.500V20.500H.5V11.500ZM.5 14.500H8.500" fill="#eef0f2" stroke="#7c838b" /></Indent>
            </RulerStack>
          </RulerRow>
          <Body>
            <VRuler>
              <VRulerTrack>
                <Slot $v><Mark $w={2} $h={1} /></Slot><Slot $v $wide />
                {Array.from({ length: 7 }, (_, i) => <Segment key={i} n={i + 1} v />)}
                <Ticks v />
              </VRulerTrack>
            </VRuler>
            <Page>
              <Scan>
                <ShowThrough width="530" height="196" viewBox="0 0 530 196">
                  <g fill="none" stroke="#8d8088" opacity=".14" strokeWidth="7" strokeDasharray="3 2 5 2 2 3 6 4 3 2 4 9">
                    <path d="M100 3H480M60 40H480" opacity=".6" /><path d="M300 56H490M90 86H490M40 142H480M60 168H490" />
                  </g>
                </ShowThrough>
                <Question>{question.join('\n')}</Question>
              </Scan>
              <Ink />
            </Page>
            <Gutter />
          </Body>
        </Column>
        <VScroll>
          <ScrollButton $h={3} aria-label="Split"><Mark $w={8} $h={2} /></ScrollButton>
          <ScrollButton $h={16} $boxed aria-label="View ruler"><svg width="12" height="12" viewBox="0 0 12 12" fill="none" stroke="#666b72"><path d="M1 1H5L8 4H11V10H8M1 1V5L3 7V9H5M4 4L9 9M6 8Q8 12 10 9" /></svg></ScrollButton>
          <ScrollButton $h={17} aria-label="Pan"><svg width="12" height="13" viewBox="0 0 12 13" fill="none" stroke="#666b72"><path d="M3 8L1 6C0 8 3 11 4 12H9C10 10 11 8 11 5C11 3 9 3 9 5V3C9 1 7 1 7 3V2C6 0 5 1 5 3V4C4 2 3 2 3 4Z" /></svg></ScrollButton>
          <ScrollButton $h={18} aria-label="Scroll up"><Down up w={8} /></ScrollButton>
          <VThumb><svg width="7" height="7"><path d="M0 .5H7M0 3.500H7M0 6.500H7" stroke="#7d848c" /></svg></VThumb>
          <Spacer />
          <ScrollButton $h={16} aria-label="Scroll down"><Down w={8} /></ScrollButton>
          <ScrollButton $h={14} aria-label="Previous page"><svg width="6" height="6"><path d="M0 3L3 0L6 3ZM0 6L3 3L6 6Z" fill="#40444a" /></svg></ScrollButton>
          <ScrollButton $h={17} aria-label="Browse object"><svg width="8" height="8"><circle cx="4" cy="4" r="3" fill="none" stroke="#555a60" /></svg></ScrollButton>
          <ScrollButton $h={16} aria-label="Next page"><svg width="6" height="6"><path d="M0 0H6L3 3ZM0 3H6L3 6Z" fill="#40444a" /></svg></ScrollButton>
        </VScroll>
      </Workspace>
      <HScroll>
        <ScrollButton $h={17} aria-label="Scroll left"><Side left /></ScrollButton>
        <HThumb><svg width="7" height="7"><path d="M.5 0V7M2.500 0V7M4.500 0V7M6.500 0V7" stroke="#8a9199" /></svg></HThumb>
        <ScrollButton $h={17} aria-label="Scroll right"><Side /></ScrollButton>
      </HScroll>

      <StatusBar>
        <StatusItem $w={50}>Page: 1</StatusItem>
        <StatusItem $w={65}>Page: 1 of 1</StatusItem><StatusSep />
        <StatusItem $w={52}>Words: 0</StatusItem><StatusSep $gap={7} />
        <StatusItem $w={31} aria-label="Proofing">
          <svg width="16" height="14" viewBox="0 0 16 14"><path d="M1 7L8 4L15 8L9 13Z" fill="#fff" stroke="#5f7fb8" /><path d="M5 6L8 9L14 1" fill="none" stroke="#3560ac" strokeWidth="2" /></svg>
        </StatusItem>
        <StatusItem $w={64}>Azeri (Latin)</StatusItem><StatusSep />
        <StatusItem $w={36}>Insert</StatusItem><StatusSep />
        <Spacer />
        <StatusSep $gap={4} />
        <ViewButton $on aria-label="Print layout"><svg width="11" height="11"><rect x=".5" y=".5" width="10" height="10" fill="#fff" stroke="#555" /><path d="M2 3.500H9M2 5.500H9M2 7.500H9" stroke="#555" /></svg></ViewButton>
        <ViewButton aria-label="Reading view"><svg width="11" height="11" fill="none" stroke="#666"><path d="M.5 1.500H5V9.500H.5ZM6 1.500H10.500V9.500H6ZM2 4H4M2 6H4M7 4H9M7 6H9M5.500 2V11" /></svg></ViewButton>
        <ViewButton aria-label="Web layout"><svg width="12" height="12"><path d="M.5 .5H9.500V9.500H.5ZM2 3H8M2 5H8M2 7H6" fill="#fff" stroke="#666" /><circle cx="8.500" cy="8.500" r="3" fill="#3c8f7c" /></svg></ViewButton>
        <ViewButton aria-label="Outline"><svg width="10" height="10"><path d="M0 1.500H7M3 3.500H9M3 5.500H9M1 7.500H7M3 9.500H9" stroke="#777" /></svg></ViewButton>
        <ViewButton aria-label="Draft"><svg width="10" height="10"><path d="M0 1.500H10M0 3.500H10M0 5.500H10M0 7.500H10M0 9.500H10" stroke="#666" /></svg></ViewButton>
        <TrayButton $w={43} $size={10}>172%</TrayButton>
        <RoundButton aria-label="Zoom out"><svg width="8" height="8"><path d="M0 4H8" stroke="#444" strokeWidth="2" /></svg></RoundButton>
        <ZoomSlider type="range" aria-label="Zoom" min={0} max={100} defaultValue={60} />
        <RoundButton aria-label="Zoom in"><svg width="8" height="8"><path d="M0 4H8M4 0V8" stroke="#444" strokeWidth="2" /></svg></RoundButton>
      </StatusBar>

      <Taskbar>
        <Task $w={46} aria-label="Start"><svg width="16" height="16"><path d="M0 2L7 1V7.500H0ZM8 1L16 0V7.500H8ZM0 8.500H7V15L0 14ZM8 8.500H16V16L8 15Z" fill="#fff" /></svg></Task>
        <Task $w={45} aria-label="Search"><svg width="22" height="22" fill="none" stroke="#fff" strokeWidth="2"><circle cx="13" cy="9" r="7" /><path d="M8 14L1 21" /></svg></Task>
        <Task $w={41} aria-label="Python file"><svg width="22" height="22" viewBox="0 0 22 22">
          <path d="M1 1H11L15 5V20H1Z" fill="#f4f4f4" stroke="#aaa" strokeWidth=".6" /><path d="M3 4H9M3 7H11M3 10H9M3 13H8M3 16H9" stroke="#999" />
          <path d="M12 9H16Q19 9 19 12V14H13Q10 14 10 17H9V13Q9 12 11 12H15V11H12Z" fill="#3b77ab" /><path d="M19 21H15Q12 21 12 18V16H18Q20 16 20 13H22V18Q22 19 20 19H16V20H19Z" fill="#f8cf45" />
        </svg></Task>
        <Task $w={41} aria-label="Math input"><svg width="24" height="22" viewBox="0 0 24 22">
          <rect x="1" y="7" width="20" height="13" fill="#dceaf3" stroke="#9cb3c2" /><path d="M4 13L6 12L8 17L10 9H16" fill="none" stroke="#3b5060" strokeWidth="1.400" /><path d="M22 1L12 12L11 14L14 13L23 3Z" fill="#1a1f24" stroke="#8b98a3" strokeWidth=".6" />
        </svg></Task>
        <Task $w={41} aria-label="Journal"><svg width="22" height="22" viewBox="0 0 22 22">
          <rect x="1" y="1" width="17" height="20" fill="#eef6e8" /><path d="M1 12C7 9 12 13 18 9V21H1Z" fill="#69bf2d" /><path d="M5 12V6M8 7H10M12 7H14M5 6H7" stroke="#222" strokeWidth="1.500" /><path d="M20 2L13 13V16L15 14L22 4Z" fill="#f0a72d" />
        </svg></Task>
        <Task $w={41} aria-label="Calculator"><svg width="18" height="22" viewBox="0 0 18 22">
          <rect width="18" height="22" fill="#637380" /><rect x="1" y="1" width="16" height="5" fill="#3fc1e0" />
          {[8, 12.5, 17].map(y => [2, 7, 12].map(x => <rect key={`${x}-${y}`} x={x} y={y} width="4" height="3.500" fill={x === 12 && y > 10 ? '#40618e' : '#dfe5ea'} />))}
        </svg></Task>
        <Task $w={41} aria-label="Snip"><svg width="20" height="24" viewBox="0 0 20 24" fill="none">
          <path d="M6 13C0 9 2 3 8 3C12 1 19 3 17 9Q16 12 14 13" stroke="#d83e20" strokeWidth="3" /><path d="M9 4L11 17M13 7L8 18" stroke="#d5d9dc" strokeWidth="2" /><circle cx="6" cy="20" r="2.500" stroke="#2b8fd1" strokeWidth="1.800" /><circle cx="13" cy="20" r="2.500" stroke="#2b8fd1" strokeWidth="1.800" />
        </svg></Task>
        <Task $w={41} aria-label="File Explorer"><svg width="22" height="20" viewBox="0 0 22 20"><path d="M1 2H8L10 4H21V18H1Z" fill="#f4bd3e" /><path d="M1 6H21V18H1Z" fill="#fbd768" /><path d="M4 11H18V18H15V14H7V18H4Z" fill="#4c93c7" /></svg></Task>
        <Task $w={41} aria-label="Paint"><svg width="24" height="24" viewBox="0 0 24 24">
          <path d="M3 17C-2 10 6 3 14 5C20 6 21 12 17 13C13 14 16 19 12 20C9 21 5 20 3 17Z" fill="#d9e3ea" stroke="#8ea2b0" strokeWidth=".7" /><circle cx="6" cy="12" r="2" fill="#e33f3a" /><circle cx="11" cy="8" r="2" fill="#3aa6dc" /><circle cx="7" cy="16" r="1.800" fill="#3d9a46" /><circle cx="12" cy="15" r="1.600" fill="#eac035" />
          <path d="M21 6L15 22" stroke="#d9963e" strokeWidth="2" /><path d="M19 2L23 1L22 8L19 7Z" fill="#b9814a" />
        </svg></Task>
        <Task $w={100} $gap={3} $pad={8} $label $open $active><WordIcon s={22} />Documen...</Task>
        <Task $w={39} aria-label="Excel"><svg width="21" height="21" viewBox="0 0 21 21"><path d="M1 3L14 1V19L1 19Z" fill="#c2e3ae" stroke="#4e9a3e" /><rect x="12" y="2" width="8" height="16" fill="#d3ecc6" stroke="#7fb56d" /><path d="M4 5L12 16M12 5L4 16" stroke="#23762a" strokeWidth="2.600" /><path d="M14 12L21 14L18 20L13 18Z" fill="#fff" /></svg></Task>
        <Task $w={92} $gap={5} $label $open><svg width="23" height="23" viewBox="0 0 24 24">
          <circle cx="12" cy="12" r="11.500" fill="#1b76c6" /><path d="M.8 10C3 0 20-3 23.500 11C24 16 19 17 14.500 15.500C18 10 13 6 9 7C5 7 2 9 .8 12Z" fill="#42c6a0" /><path d="M.8 10C3 1 11-1 16 2C10 2 4 5 .8 12Z" fill="#35b5e0" /><path d="M8 12C6 18 12 23 20 19C14 19 11 16 12 12C11 9 9 10 8 12Z" fill="#12468f" /><path d="M11 12C11 9 14 9 15 12C15 13 14 14 14.500 15.500C12 15 11 14 11 12Z" fill="#1f3340" />
        </svg>*Codera -...</Task>
        <Task $w={41} $gap={3} aria-label="Chrome"><Chrome /></Task>
        <Task $w={41} aria-label="Snipping Tool"><svg width="24" height="22" viewBox="0 0 24 22"><ellipse cx="12" cy="8" rx="10" ry="6.500" transform="rotate(-15 12 8)" fill="#f1e9e9" stroke="#c97d7d" strokeWidth="1.500" /><path d="M5 10L18 6M12 8L17 17M17 8L14 16" stroke="#9aa0a6" strokeWidth="1.500" /><circle cx="14" cy="18" r="2.500" fill="none" stroke="#3594cf" strokeWidth="1.600" /><circle cx="19" cy="17" r="2.500" fill="none" stroke="#3594cf" strokeWidth="1.600" /></svg></Task>
        <Task $w={91} $gap={3} $label $open><Chrome />WhatsAp...</Task>
        <Task $w={91} $gap={8} $label $open>
          <svg width="23" height="23" viewBox="0 0 24 24"><circle cx="12" cy="12" r="11.500" fill="#1d5bf0" /><path d="M4.500 9H9L4.500 15H9.500M11.500 15.500V11Q11.500 9 13.500 9T15.500 11V15.500M15.500 11Q15.500 9 17.500 9T19.500 11V15.500" fill="none" stroke="#fff" strokeWidth="1.900" /></svg>Zoom W...
        </Task>
        <Task $w={82} $gap={19} $label>
          <svg width="21" height="22" viewBox="0 0 21 22" fill="none" stroke="#24a3bd" strokeWidth="3"><path d="M2 12C3 7 6 3 10 2M3 18C4 12 8 5 14 2M7 20C7 13 12 6 17 4M11 21C11 15 15 9 19 8" /><path d="M15 19C15 17 17 13 20 12" stroke="#1878a8" /></svg>
          <ResultLabel>Result</ResultLabel>
        </Task>
        <Spacer />
        <TrayButton $w={24} aria-label="Hidden icons"><svg width="12" height="7" fill="none" stroke="#fff" strokeWidth="1.400"><path d="M1 6L6 1L11 6" /></svg></TrayButton>
        <TrayButton $w={22} aria-label="Meet"><svg width="13" height="15" fill="none" stroke="#fff"><path d="M3 2Q6 0 9 2M3 13Q6 15 9 13M2 4.500H8.500V10.500H2Q1 10 1 7.500T2 4.500ZM9 7L12 5V10L9 8" /></svg></TrayButton>
        <TrayButton $w={22} aria-label="Battery"><svg width="16" height="12" fill="none" stroke="#fff"><path d="M7 3.500H13.500V9.500H3V6M14 5V8H15V5M1 1V3H5V1M3 3V6" /><path d="M6 5.500H9V8H6Z" fill="#fff" /></svg></TrayButton>
        <TrayButton $w={23} aria-label="Sync"><svg width="16" height="16" fill="none" stroke="#fff"><path d="M1 3L14 1V8M1 3V13L8 14M8 4H5V10H9M8 7H11V4" strokeWidth="1.200" /><circle cx="12" cy="12" r="3.500" fill="#f29b23" stroke="none" /></svg></TrayButton>
        <TrayButton $w={22} aria-label="Network"><svg width="16" height="14" fill="none" stroke="#fff"><path d="M5 2.500H15.500V9.500H4M10 10V13M7 13H13M1 1V4H5V1M3 4V12" /></svg></TrayButton>
        <TrayButton $w={23} aria-label="Volume"><svg width="16" height="12" fill="none" stroke="#fff"><path d="M1 4H3L6 1V11L3 8H1ZM8 4Q9.500 6 8 8M10 2.500Q13 6 10 9.500M12 1Q16.500 6 12 11" /></svg></TrayButton>
        <TrayButton $w={32}>ENG</TrayButton>
        <TrayButton $w={64} $size={10}><span>22:11<br />26.03.2025</span></TrayButton>
        <TrayButton $w={36} aria-label="Notifications"><svg width="16" height="16" fill="none" stroke="#fff" strokeWidth="1.200"><path d="M1 1H15V12H10.500L8 15V12H1Z" /></svg></TrayButton>
        <ShowDesktop aria-label="Show desktop" />
      </Taskbar>

      <VideoTile>
        <Avatar>i</Avatar>
        <NameTag>İmamət Əhmədova</NameTag>
      </VideoTile>
    </Shell>
  );
}
